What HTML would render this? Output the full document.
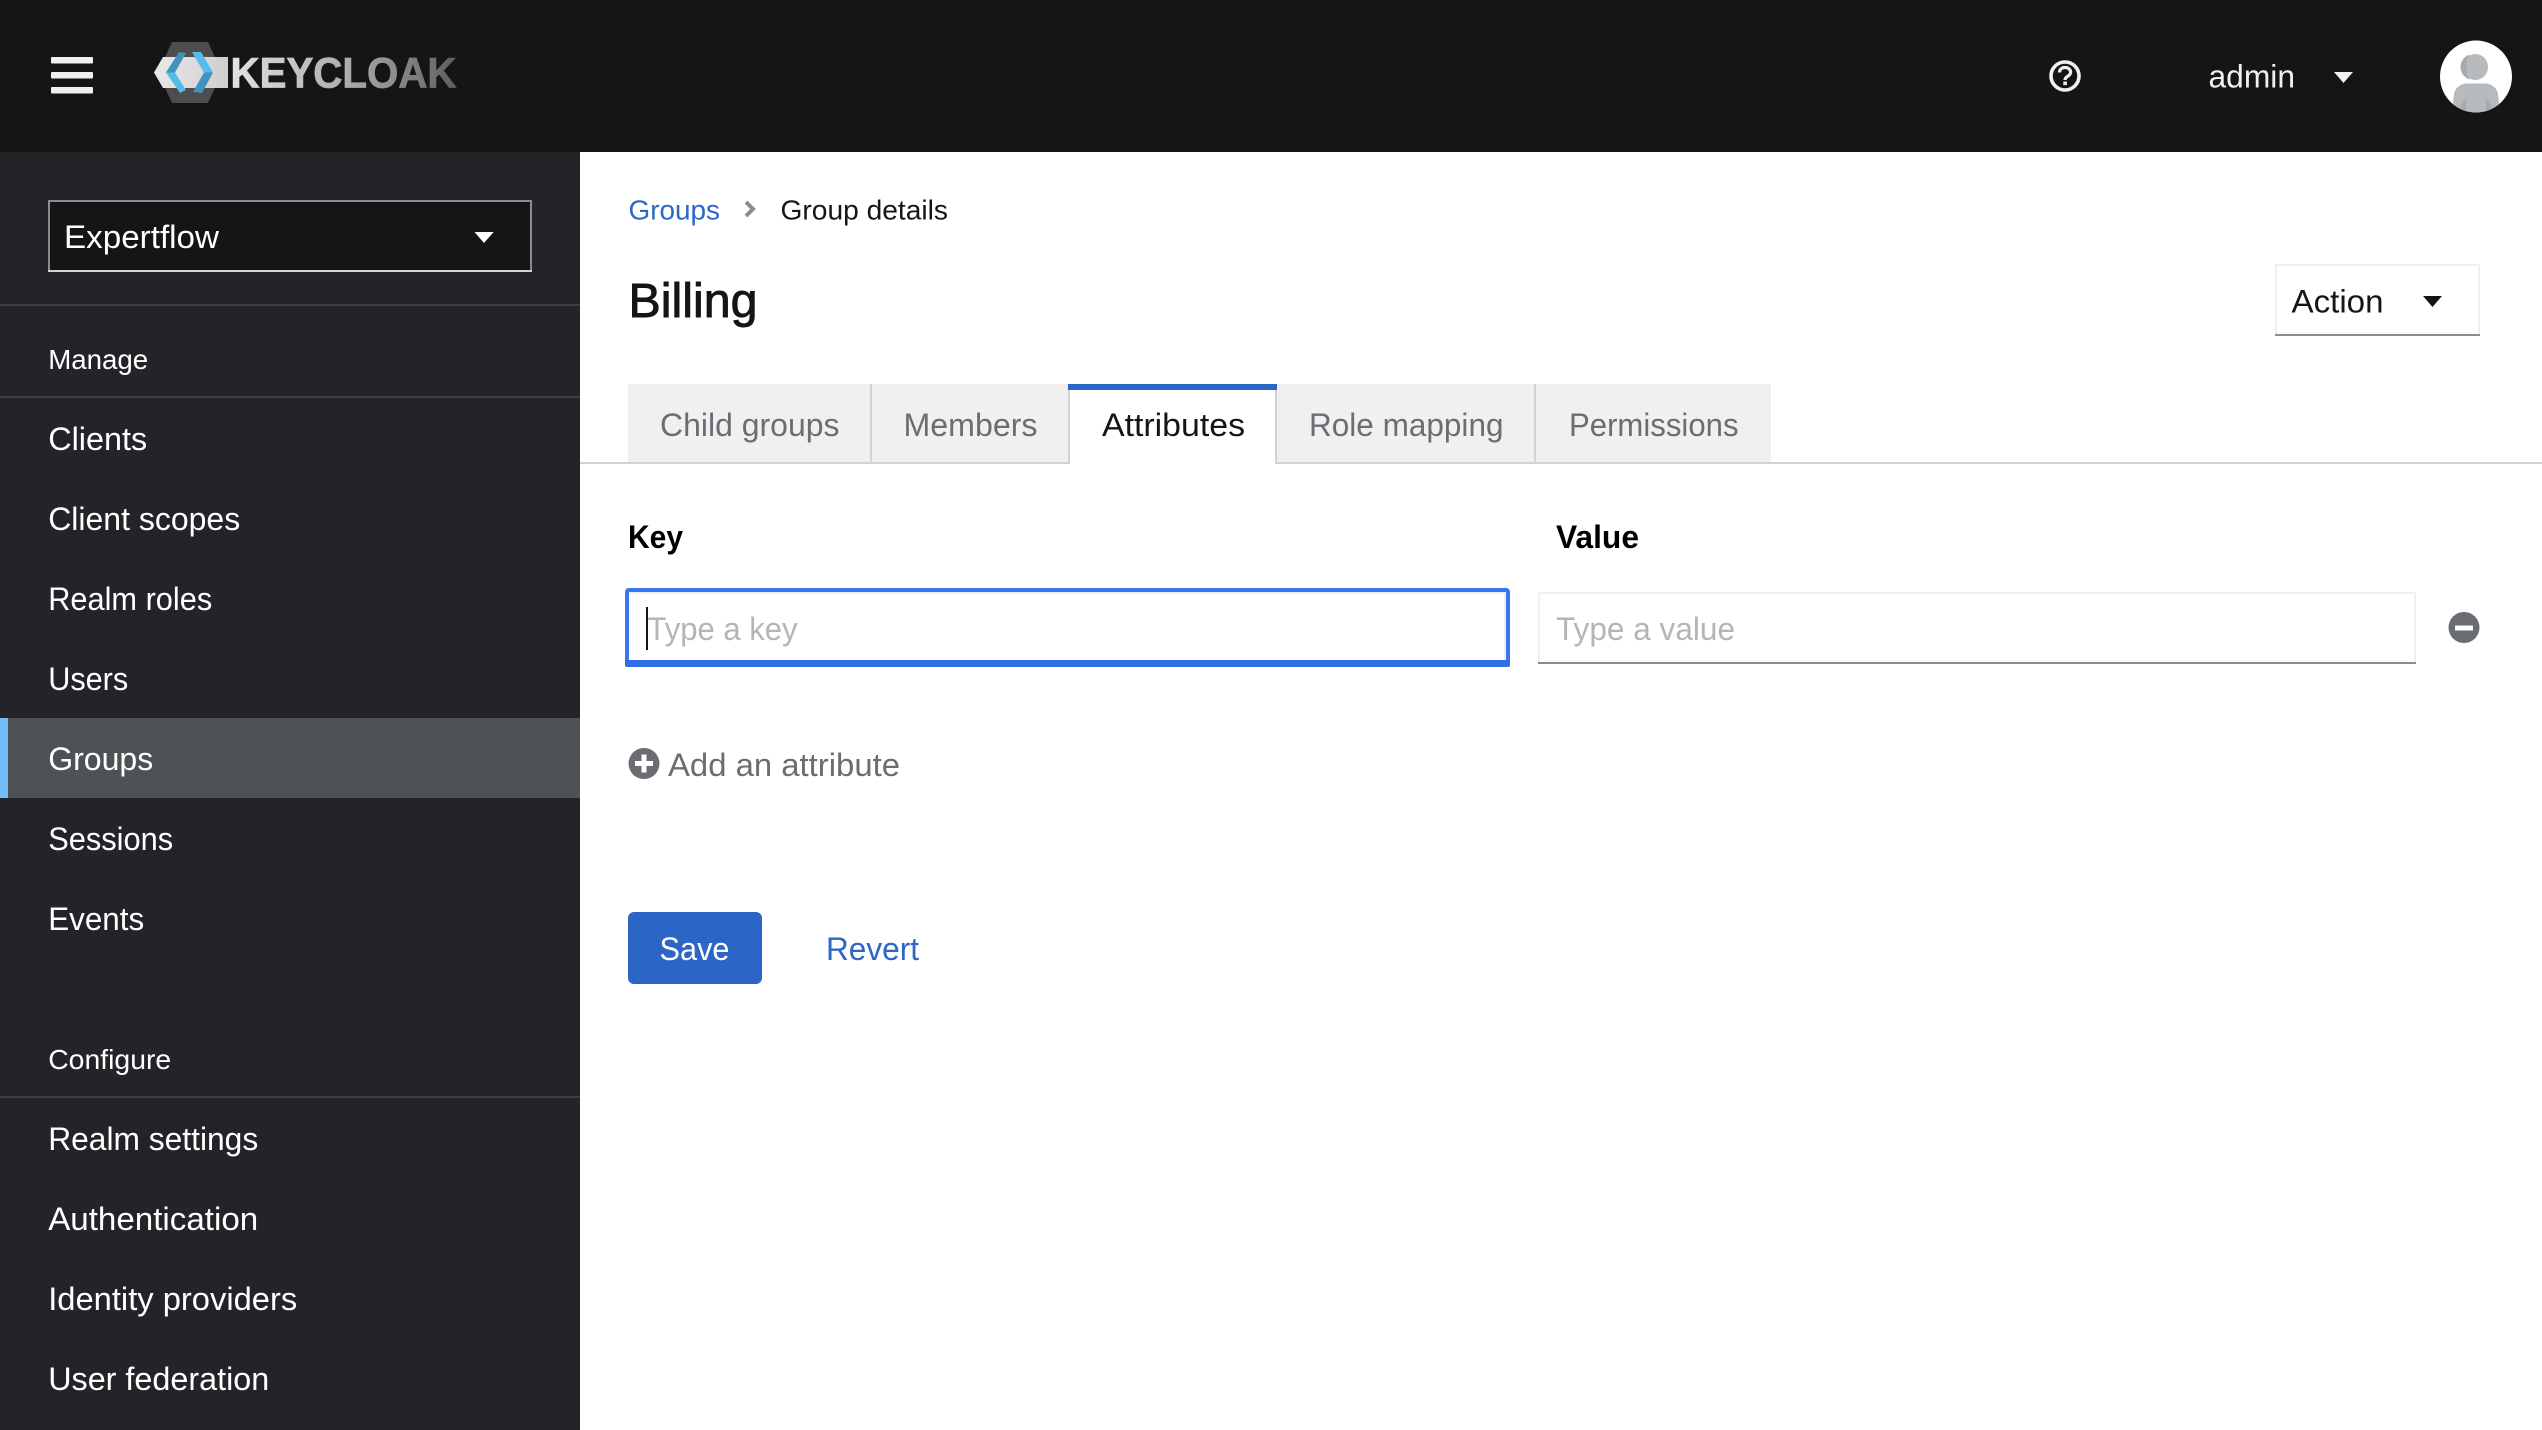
<!DOCTYPE html>
<html lang="en">
<head>
<meta charset="utf-8">
<title>Keycloak - Group details</title>
<style>
html,body{margin:0;padding:0;background:#fff;width:2542px;height:1430px;overflow:hidden}
svg{display:block}
text{font-family:"Liberation Sans",sans-serif;font-size:32px}
.n{fill:#fff}
.t{fill:#6a6e73}
</style>
</head>
<body>
<svg xmlns="http://www.w3.org/2000/svg" width="2542" height="1430" viewBox="0 0 2542 1430">
<defs>
<linearGradient id="lg" gradientUnits="userSpaceOnUse" x1="230" y1="0" x2="457" y2="0">
<stop offset="0" stop-color="#e2e2e2"/><stop offset=".5" stop-color="#aeaeae"/><stop offset=".72" stop-color="#8c8c8c"/><stop offset="1" stop-color="#5e5e5e"/>
</linearGradient>
<linearGradient id="band" gradientUnits="userSpaceOnUse" x1="154" y1="0" x2="228" y2="0">
<stop offset="0" stop-color="#e8e8e8"/><stop offset="1" stop-color="#cfcfcf"/>
</linearGradient>
<clipPath id="av"><circle cx="2476" cy="76.5" r="36"/></clipPath>
</defs>

<rect width="2542" height="1430" fill="#fff"/>
<rect width="2542" height="152" fill="#151515"/>
<rect x="0" y="152" width="580" height="1278" fill="#222428"/>

<!-- hamburger -->
<rect x="51" y="57" width="42" height="6.5" rx="1" fill="#f0f0f0"/>
<rect x="51" y="72" width="42" height="6.5" rx="1" fill="#f0f0f0"/>
<rect x="51" y="87" width="42" height="6.5" rx="1" fill="#f0f0f0"/>

<!-- logo -->
<polygon points="172,42 208,42 222,72.5 208,103 172,103 158,72.5" fill="#4d4d4d"/>
<polygon points="154,72.5 163,57 228,57 228,88 163,88" fill="url(#band)"/>
<polygon points="166,72.5 179,52 186,53 175,72.5" fill="#3f93bd"/>
<polygon points="166,72.5 175,72.5 186,90 180,93" fill="#55bce9"/>
<polygon points="192,52 201,52 213,72.5 204,72.5" fill="#55bce9"/>
<polygon points="204,72.5 213,72.5 202,93 193,92" fill="#3f93bd"/>
<text x="230.500" y="87.500" font-weight="700" style="font-size:43px;stroke:url(#lg);stroke-width:.8px" fill="url(#lg)" textLength="226" lengthAdjust="spacingAndGlyphs">KEYCLOAK</text>

<!-- header right -->
<circle cx="2065" cy="76" r="14" fill="none" stroke="#f0f0f0" stroke-width="3.6"/>
<path d="M2059.5 72.5c0-3.2 2.5-5 5.5-5s5.6 1.8 5.600 4.700c0 4.200-5.600 3.900-5.600 7.800" fill="none" stroke="#f0f0f0" stroke-width="3.200"/>
<rect x="2063.300" y="81.500" width="3.600" height="3.600" fill="#f0f0f0"/>
<text x="2208.500" y="87.500" fill="#f0f0f0" textLength="86.500" lengthAdjust="spacingAndGlyphs">admin</text>
<polygon points="2334,72 2353,72 2343.500,83" fill="#f0f0f0"/>
<circle cx="2476" cy="76.500" r="36" fill="#fff"/>
<g clip-path="url(#av)">
<ellipse cx="2475.500" cy="67" rx="12.500" ry="13" fill="#b8bbbe"/>
<path d="M2470 54.500a13 13 0 0 0 0 25a12.500 13 0 0 1-3-12.500a12.500 13 0 0 1 3-12.500z" fill="#a9a9a9"/>
<path d="M2452 114l2-20c1-6 6-10 12-10.500h20c6 .5 11 4.500 12 10.500l2 20z" fill="#b8bbbe"/>
<path d="M2461 114v-8c0-3 2-6 5-7v15zM2491 114v-8c0-3-2-6-5-7v15z" fill="#a9a9a9"/>
</g>

<!-- realm select -->
<rect x="49" y="201" width="482" height="70" fill="#151515" stroke="#8a8d90" stroke-width="2"/>
<line x1="48" y1="271" x2="532" y2="271" stroke="#d2d2d2" stroke-width="2"/>
<text x="64" y="248" class="n" textLength="155" lengthAdjust="spacingAndGlyphs">Expertflow</text>
<polygon points="474.500,232 493.700,232 484,243" fill="#fff"/>
<rect x="0" y="304" width="580" height="2" fill="#3c3f42"/>

<!-- nav -->
<g transform="translate(-.8,1)">
<text x="49" y="368" class="n" style="font-size:28px" textLength="100" lengthAdjust="spacingAndGlyphs">Manage</text>
<text x="49" y="449" class="n" textLength="99" lengthAdjust="spacingAndGlyphs">Clients</text>
<text x="49" y="529" class="n" textLength="192" lengthAdjust="spacingAndGlyphs">Client scopes</text>
<text x="49" y="609" class="n" textLength="164" lengthAdjust="spacingAndGlyphs">Realm roles</text>
<text x="49" y="689" class="n" textLength="80" lengthAdjust="spacingAndGlyphs">Users</text>
</g>
<rect x="0" y="396" width="580" height="2" fill="#3c3f42"/>
<rect x="0" y="718" width="580" height="80" fill="#4f5255"/>
<rect x="0" y="718" width="8" height="80" fill="#73bcf7"/>
<rect x="0" y="1096" width="580" height="2" fill="#3c3f42"/>
<g transform="translate(-.8,1)">
<text x="49" y="769" class="n" textLength="105" lengthAdjust="spacingAndGlyphs">Groups</text>
<text x="49" y="849" class="n" textLength="125" lengthAdjust="spacingAndGlyphs">Sessions</text>
<text x="49" y="929" class="n" textLength="96" lengthAdjust="spacingAndGlyphs">Events</text>
<text x="49" y="1068" class="n" style="font-size:28px" textLength="123" lengthAdjust="spacingAndGlyphs">Configure</text>
<text x="49" y="1149" class="n" textLength="210" lengthAdjust="spacingAndGlyphs">Realm settings</text>
<text x="49" y="1229" class="n" textLength="210" lengthAdjust="spacingAndGlyphs">Authentication</text>
<text x="49" y="1309" class="n" textLength="249" lengthAdjust="spacingAndGlyphs">Identity providers</text>
<text x="49" y="1389" class="n" textLength="221" lengthAdjust="spacingAndGlyphs">User federation</text>
</g>

<!-- breadcrumb and title -->
<text x="628.500" y="219.500" style="font-size:28px" fill="#2b66c8" textLength="91.500" lengthAdjust="spacingAndGlyphs">Groups</text>
<path d="M746 202l7 7-7 7" fill="none" stroke="#8a8d90" stroke-width="4"/>
<text x="780.500" y="219.500" style="font-size:28px" fill="#151515" textLength="167.500" lengthAdjust="spacingAndGlyphs">Group details</text>
<text x="628.500" y="317" style="font-size:48px;stroke:#151515;stroke-width:.9px" fill="#151515" textLength="129" lengthAdjust="spacingAndGlyphs">Billing</text>

<!-- action -->
<rect x="2276" y="265" width="203" height="70" fill="#fff" stroke="#f0f0f0" stroke-width="2"/>
<line x1="2275" y1="335" x2="2480" y2="335" stroke="#8a8d90" stroke-width="2"/>
<text x="2291.500" y="312.500" fill="#151515" textLength="92" lengthAdjust="spacingAndGlyphs">Action</text>
<polygon points="2423,296 2442,296 2432.500,307" fill="#151515"/>

<!-- tabs -->
<rect x="580" y="462" width="1962" height="2" fill="#d2d2d2"/>
<rect x="628" y="384" width="441" height="78" fill="#f0f0f0"/>
<rect x="1277" y="384" width="494" height="78" fill="#f0f0f0"/>
<rect x="870" y="384" width="2" height="78" fill="#d2d2d2"/>
<rect x="1068" y="390" width="2" height="74" fill="#d2d2d2"/>
<rect x="1070" y="384" width="206" height="80" fill="#fff"/>
<rect x="1275" y="390" width="2" height="74" fill="#d2d2d2"/>
<rect x="1534" y="384" width="2" height="78" fill="#d2d2d2"/>
<rect x="1068" y="384" width="209" height="6" fill="#2b65c6"/>
<text x="660" y="436" class="t" textLength="179.500" lengthAdjust="spacingAndGlyphs">Child groups</text>
<text x="903.500" y="436" class="t" textLength="134" lengthAdjust="spacingAndGlyphs">Members</text>
<text x="1102" y="436" fill="#151515" textLength="143" lengthAdjust="spacingAndGlyphs">Attributes</text>
<text x="1309" y="436" class="t" textLength="194.500" lengthAdjust="spacingAndGlyphs">Role mapping</text>
<text x="1569" y="436" class="t" textLength="169.500" lengthAdjust="spacingAndGlyphs">Permissions</text>

<!-- labels -->
<text x="628" y="548" font-weight="700" fill="#000" textLength="55" lengthAdjust="spacingAndGlyphs">Key</text>
<text x="1556" y="548" font-weight="700" fill="#000" textLength="83" lengthAdjust="spacingAndGlyphs">Value</text>

<!-- key input -->
<rect x="625" y="588" width="885" height="79" rx="4" fill="#3577ee"/>
<rect x="629" y="592" width="877" height="68" fill="#fff"/>
<rect x="629" y="592" width="877" height="2" fill="#f0f0f0"/>
<rect x="1504" y="592" width="2" height="68" fill="#f0f0f0"/>
<rect x="625" y="660" width="885" height="7" rx="2" fill="#2f6fe4"/>
<text x="647.500" y="640" fill="#b3b5b8" textLength="150" lengthAdjust="spacingAndGlyphs">Type a key</text>
<rect x="646" y="607" width="2" height="43" fill="#151515"/>

<!-- value input -->
<rect x="1539" y="593" width="876" height="70" fill="#fff" stroke="#f0f0f0" stroke-width="2"/>
<rect x="1538" y="662" width="878" height="2" fill="#8a8d90"/>
<text x="1556" y="640" fill="#b3b5b8" textLength="179" lengthAdjust="spacingAndGlyphs">Type a value</text>

<!-- minus -->
<circle cx="2464" cy="627.500" r="15.500" fill="#6a6e73"/>
<rect x="2455" y="625.500" width="18" height="5" fill="#fff"/>

<!-- add -->
<circle cx="644" cy="763.500" r="15.500" fill="#6a6e73"/>
<rect x="635" y="761" width="18" height="5" fill="#fff"/>
<rect x="641.500" y="754.500" width="5" height="18" fill="#fff"/>
<text x="668" y="776" class="t" textLength="232" lengthAdjust="spacingAndGlyphs">Add an attribute</text>

<!-- buttons -->
<rect x="628" y="912" width="134" height="72" rx="6" fill="#2b65c6"/>
<text x="659.500" y="960" fill="#fff" textLength="70" lengthAdjust="spacingAndGlyphs">Save</text>
<text x="826" y="960" fill="#2b66c8" textLength="93" lengthAdjust="spacingAndGlyphs">Revert</text>
</svg>
</body>
</html>
